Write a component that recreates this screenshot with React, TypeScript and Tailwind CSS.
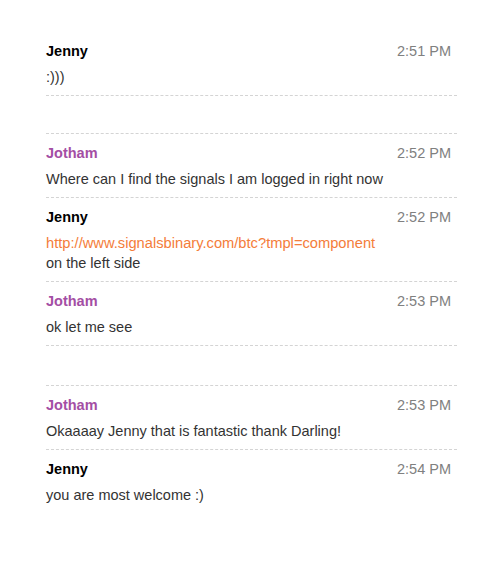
type Msg = { name: string; time: string; lines: { text: string; link?: boolean }[] } | { gap: number };

const items: Msg[] = [
  { name: "Jenny", time: "2:51 PM", lines: [{ text: ":)))" }] },
  { gap: 38 },
  { name: "Jotham", time: "2:52 PM", lines: [{ text: "Where can I find the signals I am logged in right now" }] },
  {
    name: "Jenny",
    time: "2:52 PM",
    lines: [{ text: "http://www.signalsbinary.com/btc?tmpl=component", link: true }, { text: "on the left side" }],
  },
  { name: "Jotham", time: "2:53 PM", lines: [{ text: "ok let me see" }] },
  { gap: 40 },
  { name: "Jotham", time: "2:53 PM", lines: [{ text: "Okaaaay Jenny that is fantastic thank Darling!" }] },
  { name: "Jenny", time: "2:54 PM", lines: [{ text: "you are most welcome :)" }] },
];

export default function App() {
  return (
    <div className="min-h-[582px] w-[488px] bg-white pt-8 font-['Liberation_Sans',Arial,sans-serif]">
      <div className="ml-[46px] w-[411px]">
        {items.map((m, i) => {
          const last = i === items.length - 1;
          const border = last ? "" : "border-b border-dashed border-[#d4d4d4]";
          if ("gap" in m) {
            return <div key={i} className={border} style={{ height: m.gap }} />;
          }
          return (
            <div key={i} className={`pt-[10px] pb-2 ${border}`}>
              <div className="flex h-5 items-center justify-between pr-[6px]">
                <span
                  className={`text-[14.5px] font-bold ${m.name === "Jotham" ? "text-[#a44ea4]" : "text-black"}`}
                >
                  {m.name}
                </span>
                <span className="text-[14.5px] text-[#808080]">{m.time}</span>
              </div>
              <div className="mt-[5px]">
                {m.lines.map((l, j) => (
                  <div
                    key={j}
                    className={`leading-5 ${l.link ? "text-[14.7px] text-[#f47d3a]" : "text-[14.5px] text-[#333333]"}`}
                  >
                    {l.text}
                  </div>
                ))}
              </div>
            </div>
          );
        })}
      </div>
    </div>
  );
}
